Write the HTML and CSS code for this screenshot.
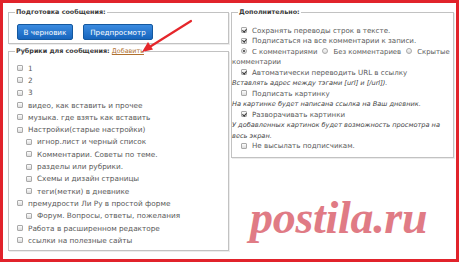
FILE: index.html
```html
<!DOCTYPE html>
<html lang="ru">
<head>
<meta charset="utf-8">
<title>Подготовка сообщения</title>
<link rel="stylesheet" href="styles.css">
</head>
<body>
<div class="frame">
  <div class="left">
    <fieldset class="fs fs-prep">
      <legend>Подготовка сообщения:</legend>
      <div class="btns">
        <span class="btn btn-a">В черновик</span>
        <span class="btn btn-b">Предпросмотр</span>
      </div>
    </fieldset>
    <fieldset class="fs fs-rub">
      <legend>Рубрики для сообщения: <a class="add">Добавить</a></legend>
      <ul class="cats">
        <li><span class="cb"></span><span>1</span></li>
        <li><span class="cb"></span><span>2</span></li>
        <li><span class="cb"></span><span>3</span></li>
        <li><span class="cb"></span><span>видео, как вставить и прочее</span></li>
        <li><span class="cb"></span><span>музыка. где взять как вставить</span></li>
        <li><span class="cb"></span><span>Настройки(старые настройки)</span></li>
        <li class="sub"><span class="cb"></span><span>игнор.лист и черный список</span></li>
        <li class="sub"><span class="cb"></span><span>Комментарии. Советы по теме.</span></li>
        <li class="sub"><span class="cb"></span><span>разделы или рубрики.</span></li>
        <li class="sub"><span class="cb"></span><span>Схемы и дизайн страницы</span></li>
        <li class="sub"><span class="cb"></span><span>теги(метки) в дневнике</span></li>
        <li><span class="cb"></span><span>премудрости Ли Ру в простой форме</span></li>
        <li class="sub"><span class="cb"></span><span>Форум. Вопросы, ответы, пожелания</span></li>
        <li><span class="cb"></span><span>Работа в расширенном редакторе</span></li>
        <li><span class="cb"></span><span>ссылки на полезные сайты</span></li>
      </ul>
    </fieldset>
  </div>
  <fieldset class="fs fs-extra">
    <legend>Дополнительно:</legend>
    <div class="opts">
      <div class="opt"><span class="cb on"></span>Сохранять переводы строк в тексте.</div>
      <div class="opt"><span class="cb on"></span>Подписаться на все комментарии к записи.</div>
      <div class="opt radios"><span class="ro first"><span class="rb on"></span>С комментариями</span><span class="ro"><span class="rb"></span>Без комментариев</span><span class="ro"><span class="rb"></span>Скрытые</span> комментарии</div>
      <div class="opt"><span class="cb on"></span>Автоматически переводить URL в ссылку</div>
      <div class="hint">Вставлять адрес между тэгами [url] и [/url]).</div>
      <div class="opt"><span class="cb"></span>Подписать картинку</div>
      <div class="hint">На картинке будет написана ссылка на Ваш дневник.</div>
      <div class="opt"><span class="cb on"></span>Разворачивать картинки</div>
      <div class="hint">У добавленных картинок будет возможность просмотра на весь экран.</div>
      <div class="opt"><span class="cb"></span>Не высылать подписчикам.</div>
    </div>
  </fieldset>
</div>
<svg class="arrow" width="460" height="263" viewBox="0 0 460 263">
  <line x1="191" y1="21" x2="148" y2="48" stroke="#e5262b" stroke-width="2.2" stroke-linecap="round"/>
  <polygon points="142,52 153,49.5 148,42" fill="#e5262b"/>
</svg>
<div class="wm">postila.ru</div>
</body>
</html>
```

FILE: styles.css
```css
html, body {
  margin: 0;
  padding: 0;
  background: #fff;
}
body {
  width: 460px;
  height: 263px;
  overflow: hidden;
  position: relative;
  font-family: "DejaVu Sans", Verdana, sans-serif;
  font-size: 7.3px;
  color: #5a5a5a;
}
.frame {
  box-sizing: border-box;
  width: 459px;
  height: 262px;
  border: 3px solid #e1232b;
  padding: 5px 2px 0 5px;
  display: flex;
  align-items: flex-start;
  gap: 2px;
}
.left {
  width: 221px;
  flex: none;
  display: flex;
  flex-direction: column;
  gap: 3px;
}
.fs {
  margin: 0;
  min-width: 0;
  border: 1px solid #c2c2c2;
  box-shadow: 1px 1px 0 #ececec;
  padding: 0;
}
legend {
  font-weight: bold;
  font-size: 6.4px;
  color: #3a3a3a;
  line-height: 9px;
  padding: 0 1px;
  margin-left: 6px;
}
.add {
  font-weight: normal;
  color: #b0702e;
  text-decoration: underline;
}
.btns {
  display: flex;
  gap: 10px;
  padding: 7px 0 3px 8px;
}
.btn {
  height: 16px;
  line-height: 16px;
  box-sizing: border-box;
  border: 1px solid #14589f;
  border-radius: 2px;
  background: linear-gradient(#3b8be0, #1765bd);
  color: #fff;
  font-size: 7.2px;
  text-align: center;
}
.btn-a { width: 56px; }
.btn-b { width: 70px; }
.cats {
  list-style: none;
  margin: 0;
  padding: 6px 0 4px 0;
}
.cats li {
  display: flex;
  align-items: center;
  height: 12.3px;
  padding-left: 8px;
  white-space: nowrap;
}
.cats li.sub {
  padding-left: 17px;
}
.cb {
  box-sizing: border-box;
  flex: none;
  display: inline-block;
  position: relative;
  width: 6px;
  height: 6px;
  border: 1px solid #a9a9a9;
  border-radius: 1px;
  background: linear-gradient(#fdfdfd, #dcdcdc);
  margin-right: 5px;
  vertical-align: -0.5px;
}
.cb.on::after {
  content: "";
  position: absolute;
  left: 0.8px;
  top: -0.6px;
  width: 1.6px;
  height: 3px;
  border-right: 1.2px solid #333;
  border-bottom: 1.2px solid #333;
  transform: rotate(40deg);
}
.radios {
  font-size: 6.9px;
}
.ro {
  margin-left: 5px;
}
.ro.first {
  margin-left: 9px;
}
.rb {
  box-sizing: border-box;
  display: inline-block;
  position: relative;
  width: 6px;
  height: 6px;
  border: 1px solid #a9a9a9;
  border-radius: 50%;
  background: linear-gradient(#fdfdfd, #dcdcdc);
  margin-right: 5px;
  vertical-align: -0.5px;
}
.rb.on::after {
  content: "";
  position: absolute;
  left: 1px;
  top: 1px;
  width: 2px;
  height: 2px;
  border-radius: 50%;
  background: #333;
}
.fs-extra {
  flex: 1;
  height: 150px;
  box-sizing: border-box;
}
.opts {
  padding: 8.7px 0 3px 0;
  line-height: 10.5px;
  font-size: 7.1px;
}
.opt > .cb:first-child {
  margin-left: 9px;
}
.hint {
  font-style: italic;
  font-size: 6.6px;
  color: #444;
}
.arrow {
  position: absolute;
  left: 0;
  top: 0;
  pointer-events: none;
}
.wm {
  position: absolute;
  left: 250px;
  top: 192px;
  font-family: "Liberation Serif", serif;
  font-weight: bold;
  font-style: italic;
  font-size: 46px;
  line-height: 52px;
  color: #e07b85;
  letter-spacing: -0.3px;
}
```
